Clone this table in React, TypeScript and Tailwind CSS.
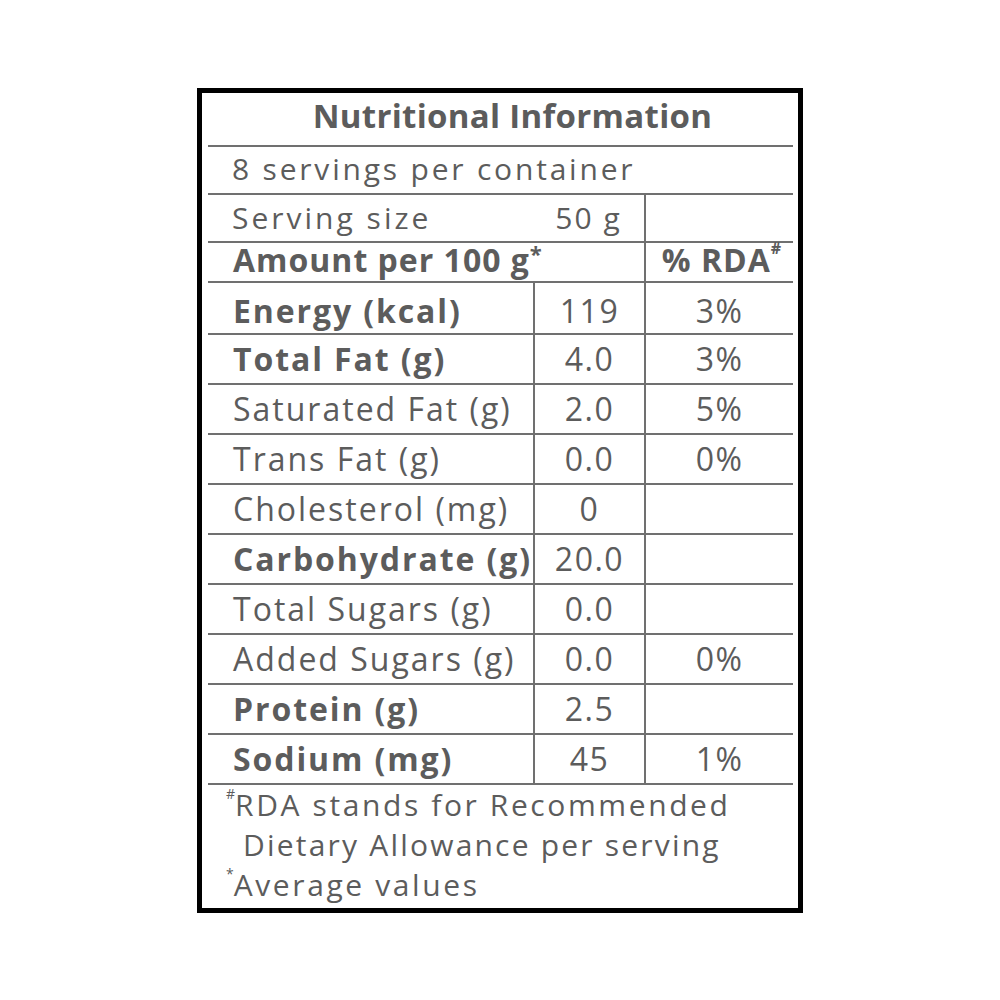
const rows = [
  { name: "Energy (kcal)", value: "119", rda: "3%", bold: true, h: "h-[52px]", pad: "pt-[4px]" },
  { name: "Total Fat (g)", value: "4.0", rda: "3%", bold: true, h: "h-[50px]", pad: "" },
  { name: "Saturated Fat (g)", value: "2.0", rda: "5%", bold: false, h: "h-[50px]", pad: "pb-[6px]" },
  { name: "Trans Fat (g)", value: "0.0", rda: "0%", bold: false, h: "h-[50px]", pad: "pb-[6px]" },
  { name: "Cholesterol (mg)", value: "0", rda: "", bold: false, h: "h-[50px]", pad: "pb-[6px]" },
  { name: "Carbohydrate (g)", value: "20.0", rda: "", bold: true, h: "h-[50px]", pad: "" },
  { name: "Total Sugars (g)", value: "0.0", rda: "", bold: false, h: "h-[50px]", pad: "pb-[6px]" },
  { name: "Added Sugars (g)", value: "0.0", rda: "0%", bold: false, h: "h-[50px]", pad: "pb-[6px]" },
  { name: "Protein (g)", value: "2.5", rda: "", bold: true, h: "h-[50px]", pad: "" },
  { name: "Sodium (mg)", value: "45", rda: "1%", bold: true, h: "h-[50px]", pad: "" },
];

const NutritionLabel = () => {
  return (
    <div className="w-[1000px] h-[1000px] bg-white flex justify-center items-center font-['Open_Sans',sans-serif] text-[#5c5c5c]">
      <div className="w-[606px] border-[5px] border-black pl-[6px] pr-[5px]">
        {/* title */}
        <div className="h-[54px] border-b-2 border-[#707070] flex items-center justify-center pl-[24px] pb-[6px]">
          <h1 className="text-[33px] font-bold tracking-[0.3px]">Nutritional Information</h1>
        </div>
        <div className="h-[48px] border-b-2 border-[#707070] flex items-center pl-[24px] pb-[2px] text-[30px] tracking-[2.8px]">
          8 servings per container
        </div>
        {/* serving size */}
        <div className="h-[48px] border-b-2 border-[#707070] grid grid-cols-[436px_1fr] text-[30px]">
          <div className="grid grid-cols-[325px_1fr] items-center">
            <span className="pl-[24px] tracking-[3px]">Serving size</span>
            <span className="text-center tracking-[2px]">50 g</span>
          </div>
          <div className="border-l-2 border-[#707070]"></div>
        </div>
        {/* amount header */}
        <div className="h-[40px] border-b-2 border-[#707070] grid grid-cols-[436px_1fr] text-[32px] leading-none font-bold">
          <div className="flex items-center pl-[25px] pb-[4px] tracking-[1px]">
            Amount per 100 g<sup className="text-[22px] top-[-0.3em]">*</sup>
          </div>
          <div className="border-l-2 border-[#707070] flex items-center justify-center pl-[4px] pb-[4px] tracking-[1px]">
            % RDA<sup className="text-[16px] font-bold top-[-0.75em] tracking-normal">#</sup>
          </div>
        </div>
        {/* nutrient rows */}
        {rows.map((r) => (
          <div
            key={r.name}
            className={`${r.h} border-b-2 border-[#707070] grid grid-cols-[325px_111px_1fr] text-[32px]`}
          >
            <div
              className={`${r.pad} flex items-center pl-[25px] whitespace-nowrap ${
                r.bold ? "font-bold tracking-[1.9px]" : "tracking-[2px]"
              }`}
            >
              {r.name}
            </div>
            <div className={`${r.pad} border-l-2 border-[#707070] flex items-center justify-center tracking-[1.5px]`}>
              {r.value}
            </div>
            <div className={`${r.pad} border-l-2 border-[#707070] flex items-center justify-center tracking-[1.5px]`}>
              {r.rda}
            </div>
          </div>
        ))}
        {/* footnotes */}
        <div className="h-[123px] text-[30px] leading-[40px] tracking-[2.6px]">
          <p className="pl-[18px]">
            <sup className="text-[14px] top-[-1.2em] tracking-normal">#</sup>RDA stands for Recommended
          </p>
          <p className="pl-[35px] tracking-[2.2px]">Dietary Allowance per serving</p>
          <p className="pl-[18px]">
            <sup className="text-[14px] top-[-1.2em] tracking-normal">*</sup>Average values
          </p>
        </div>
      </div>
    </div>
  );
};

export default NutritionLabel;
